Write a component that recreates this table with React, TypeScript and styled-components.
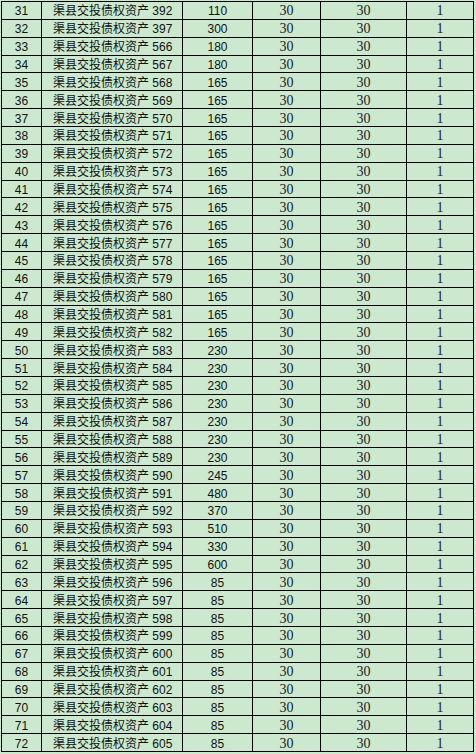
import { Fragment } from 'react';
import styled, { createGlobalStyle } from 'styled-components';

const GlobalStyle = createGlobalStyle`
  html, body {
    margin: 0;
    padding: 0;
    background: #cce8cf;
  }
`;

const amounts: number[] = [
  110, 300, 180, 180, 165, 165, 165, 165, 165, 165, 165, 165, 165, 165, 165, 165, 165, 165, 165,
  230, 230, 230, 230, 230, 230, 230, 245, 480, 370, 510, 330, 600,
  85, 85, 85, 85, 85, 85, 85, 85, 85, 85,
];

const codes: number[] = [392, 397, ...Array.from({ length: 40 }, (_, i) => 566 + i)];

const rows = amounts.map((amount, i) => ({
  no: 31 + i,
  name: `渠县交投债权资产 ${codes[i]}`,
  amount,
}));

const Page = styled.div`
  padding: 1px 0 0 1px;
  height: 754px;
  box-sizing: border-box;
`;

const Sheet = styled.div`
  display: grid;
  grid-template-columns: 39px 140px 69px 67px 85px 66px;
  grid-template-rows: repeat(42, 1fr);
  gap: 1px;
  padding: 1px;
  width: fit-content;
  height: 751px;
  box-sizing: border-box;
  background: #000;
`;

const Cell = styled.div<{ $serif?: boolean; $left?: boolean }>`
  background: #cce8cf;
  display: flex;
  align-items: center;
  justify-content: ${(p) => (p.$left ? 'flex-start' : 'center')};
  padding-left: ${(p) => (p.$left ? '11px' : '0')};
  padding-top: 2px;
  overflow: hidden;
  white-space: nowrap;
  font-family: ${(p) =>
    p.$serif
      ? '"Liberation Serif", "Noto Sans CJK SC", serif'
      : '"Liberation Sans", "Noto Sans CJK SC", sans-serif'};
  font-size: ${(p) => (p.$serif ? '14px' : '12px')};
  color: ${(p) => (p.$serif ? '#1c1c2a' : '#111')};
  line-height: 1;
`;

export default function App() {
  return (
    <Page>
      <GlobalStyle />
      <Sheet>
        {rows.map((r) => (
          <Fragment key={r.no}>
            <Cell>{r.no}</Cell>
            <Cell $left>{r.name}</Cell>
            <Cell>{r.amount}</Cell>
            <Cell $serif>30</Cell>
            <Cell $serif>30</Cell>
            <Cell $serif>1</Cell>
          </Fragment>
        ))}
      </Sheet>
    </Page>
  );
}
